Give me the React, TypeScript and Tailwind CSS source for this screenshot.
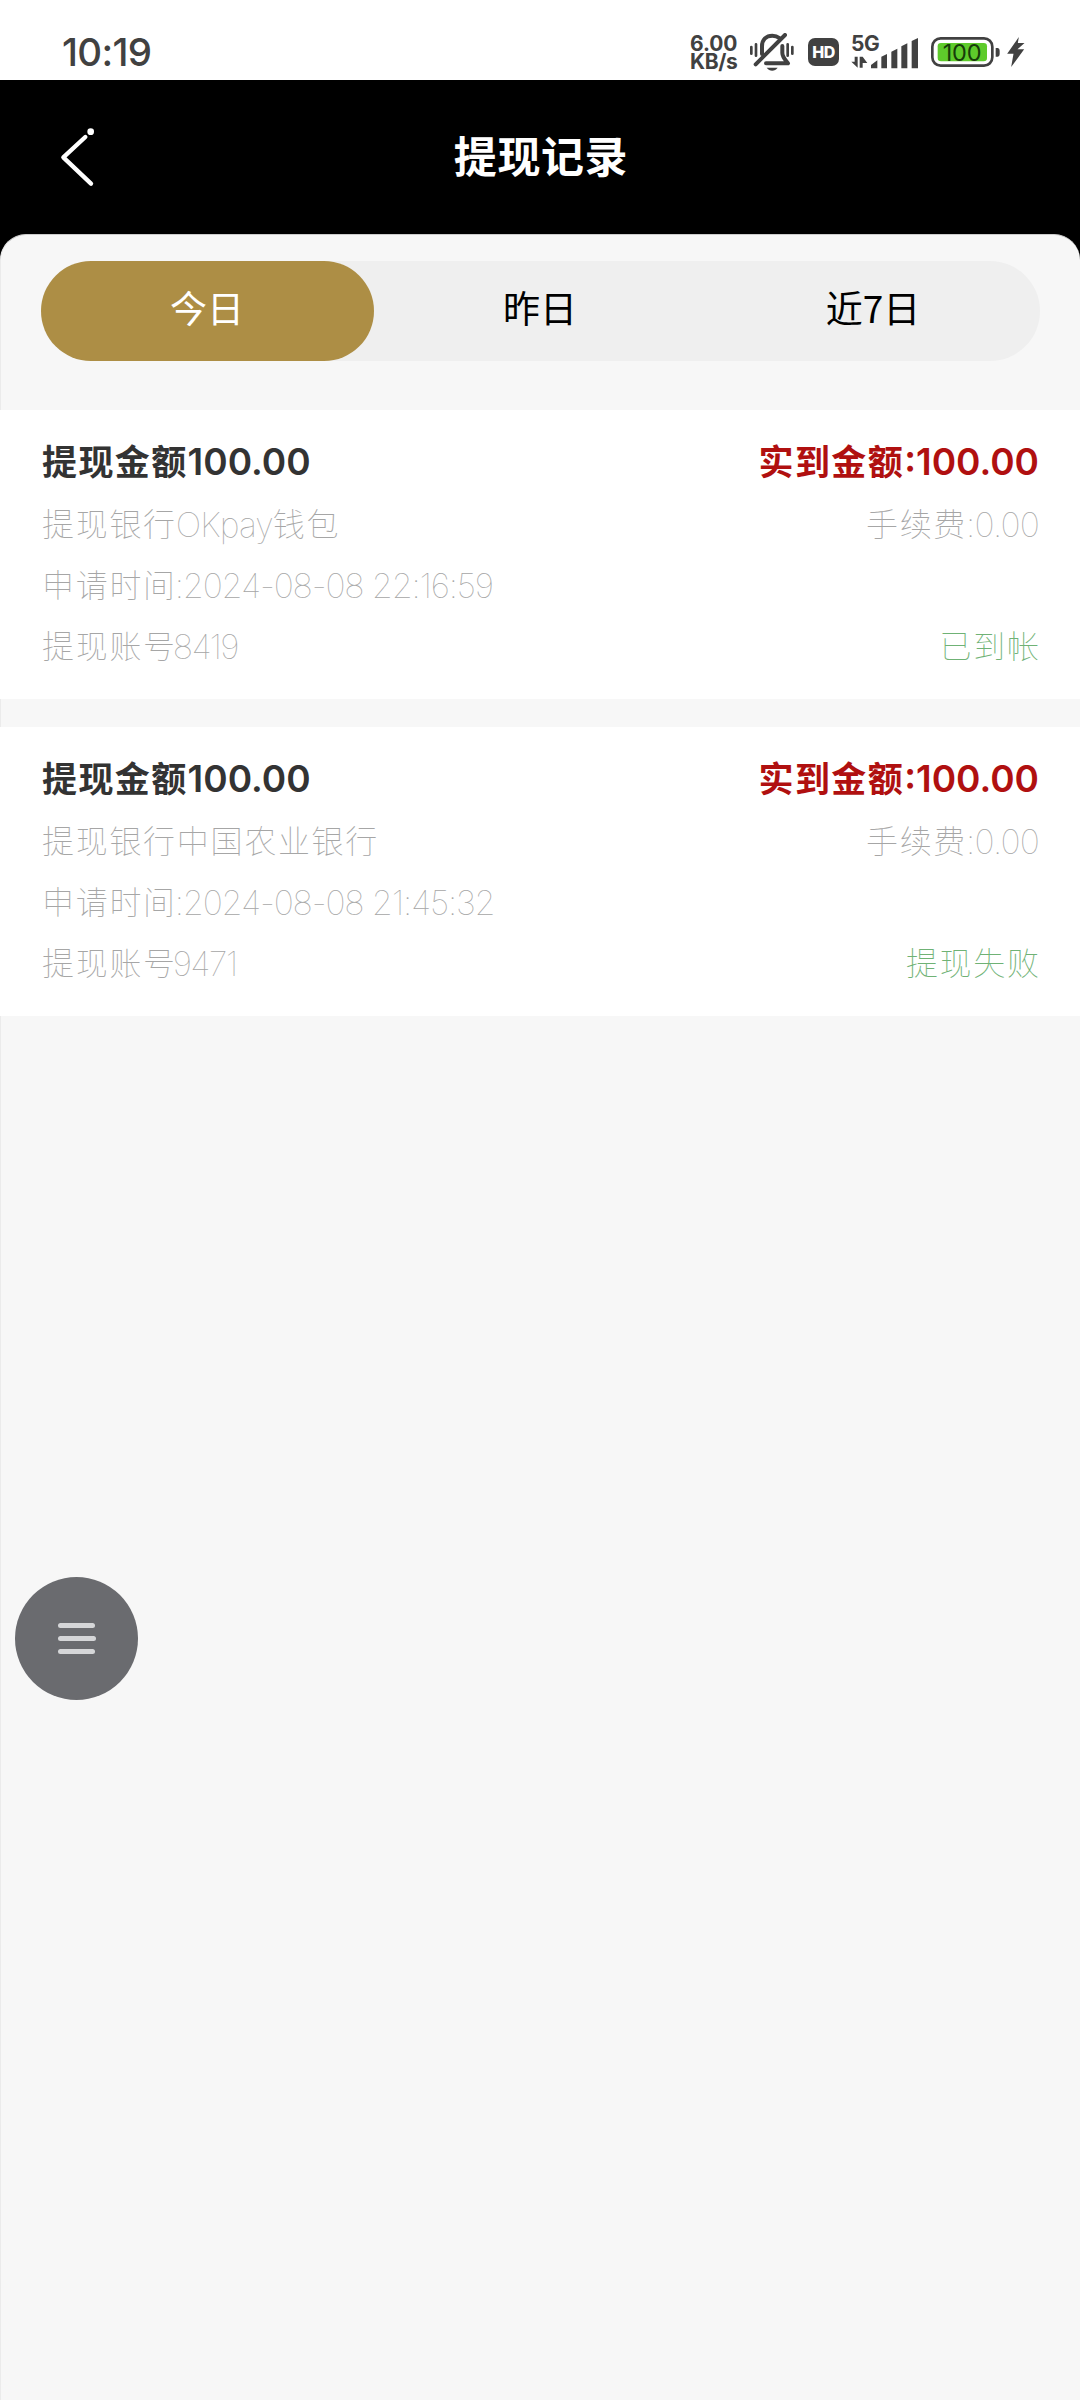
import React, { useState } from "react";
import clsx from "clsx";

interface WithdrawRecord {
  id: number;
  amount: string;
  received: string;
  bank: string;
  bankLatin?: string;
  bankTail?: string;
  fee: string;
  time: string;
  account: string;
  status: string;
}

const TABS = ["今日", "昨日", "近7日"];

const RECORDS: WithdrawRecord[] = [
  {
    id: 1,
    amount: "100.00",
    received: "100.00",
    bank: "",
    bankLatin: "OKpay",
    bankTail: "钱包",
    fee: "0.00",
    time: "2024-08-08 22:16:59",
    account: "8419",
    status: "已到帐",
  },
  {
    id: 2,
    amount: "100.00",
    received: "100.00",
    bank: "中国农业银行",
    fee: "0.00",
    time: "2024-08-08 21:45:32",
    account: "9471",
    status: "提现失败",
  },
];

function StatusBar() {
  return (
    <div className="flex h-20 items-start justify-between bg-white pl-[62px] pr-[55px] font-['Inter','Noto_Sans_CJK_SC',sans-serif] text-[#414141]">
      <span className="mt-[33px] text-[38.5px] leading-[38px] font-medium tracking-[-0.7px]">10:19</span>
      <div className="mt-[34px] flex h-9 items-center">
        <div className="mt-[2px] flex w-[49px] flex-col text-[21px] leading-[18.5px] font-bold">
          <span className="tracking-[-0.1px]">6.00</span>
          <span className="tracking-[-0.4px]">KB/s</span>
        </div>
        {/* 静音 */}
        <svg className="ml-[10px] h-[38px] w-[46px]" viewBox="267 40 138 114" fill="none" stroke="#414141" strokeWidth="12" strokeLinecap="round">
          <path d="M274 82v20M288 74v34M383 74v34M397 82v20" strokeWidth="8" />
          <path d="M306 103V80c0-20 13-32 31-32 9 0 16 3 21 7" />
          <path d="M375 46 287 134" />
          <path d="M367 79v21c0 12 8 20 17 31H318" strokeLinejoin="round" />
          <path d="M320 144h33c-8 12-25 12-33 0Z" fill="#414141" stroke="none" />
        </svg>
        <div className="ml-[13px] flex h-[28px] w-[31px] items-center justify-center rounded-[7px] bg-[#414141] text-[16px] font-extrabold tracking-[-0.4px] text-white">
          HD
        </div>
        <div className="relative ml-[12px] h-[36px] w-[68px]">
          <span className="absolute -top-px left-0 text-[21px] leading-[21px] font-bold tracking-[-0.5px]">5G</span>
          <svg className="h-[36px] w-[68px]" viewBox="570 40 204 108" fill="#414141">
            <path d="M571 123h10v-15h9v33zM596 108v33h9v-33zM605 108l14 19h-14z" />
            <path d="M630 133l19-14v24h-19zM661 108l17-8v43h-17zM691 93l18-9v59h-18zM721 77l18-9v75h-18zM752 61l19-9v91h-19z" />
          </svg>
        </div>
        <div className="relative ml-[12px] h-[30px] w-[70px]">
          <svg className="h-[30px] w-[70px]" viewBox="813 50 210 90" fill="none">
            <rect x="817" y="54" width="180" height="82" rx="25" stroke="#414141" strokeWidth="8" />
            <rect x="833" y="68" width="148" height="55" rx="10" fill="#5ecb2b" />
            <path d="M1007 83h7q5 2 5 8v10q0 7-5 8h-7z" fill="#414141" />
          </svg>
          <span className="absolute inset-y-0 left-0 w-[62px] text-center text-[23.5px] leading-[31px] tracking-[-0.2px] text-[#173d09]">100</span>
        </div>
        <svg className="ml-[5px] h-[30px] w-[19px]" viewBox="1040 51 56 90" fill="#414141">
          <path d="M1078 51 1043 101H1062L1055 141 1094 88H1074L1095 69H1075z" />
        </svg>
      </div>
    </div>
  );
}

function Label({ children }: { children: React.ReactNode }) {
  return <span className="text-[32px] tracking-[1.7px]">{children}</span>;
}

function RecordCard({ record }: { record: WithdrawRecord }) {
  return (
    <article className="-ml-px h-[289px] bg-white pt-[21px] pr-[41px] pl-[42px] font-thin text-[#a6a6a6]">
      <div className="mb-px flex h-[62px] items-center justify-between text-[35px] leading-[48px] font-bold">
        <div className="flex text-[#333333]">
          <span className="tracking-[1.4px]">提现金额</span>
          <span className="text-[37px] font-semibold">{record.amount}</span>
        </div>
        <div className="flex text-[#b01010]">
          <span className="tracking-[1.4px]">实到金额</span>
          <span className="text-[37px] font-semibold">:{record.received}</span>
        </div>
      </div>
      <div className="flex h-[61px] items-center justify-between">
        <div className="flex items-center">
          <Label>提现银行{record.bank}</Label>
          {record.bankLatin && <span className="-ml-px text-[34px] tracking-[-0.9px]">{record.bankLatin}</span>}
          {record.bankTail && <Label>{record.bankTail}</Label>}
        </div>
        <div className="flex items-center">
          <Label>手续费</Label>
          <span className="-ml-px text-[34px] tracking-[-0.8px]">:{record.fee}</span>
        </div>
      </div>
      <div className="flex h-[61px] items-center">
        <Label>申请时间</Label>
        <span className="-ml-[2px] text-[34px] tracking-[-1.2px]">:{record.time}</span>
      </div>
      <div className="flex h-[61px] items-center justify-between">
        <div className="flex items-center">
          <Label>提现账号</Label>
          <span className="-ml-[4px] text-[34px] tracking-[-1.7px]">{record.account}</span>
        </div>
        <span className="-mr-[1.7px] text-[32px] tracking-[1.7px] text-[#6fb275]">{record.status}</span>
      </div>
    </article>
  );
}

export default function App() {
  const [activeTab, setActiveTab] = useState(0);

  return (
    <div className="flex h-[2400px] w-[1080px] flex-col overflow-hidden bg-black font-['Inter','Noto_Sans_CJK_SC',sans-serif]">
      <StatusBar />

      <header className="grid h-[154px] grid-cols-[1fr_auto_1fr] items-center pr-[56px] pl-[58px]">
        <button className="h-[64px] w-[40px]" aria-label="返回">
          <svg className="h-[64px] w-[40px]" viewBox="174 375 120 192" fill="none" stroke="#fff" strokeWidth="13" strokeLinecap="round" strokeLinejoin="round">
            <path d="M256 411 190 472 273 551" />
            <circle cx="272" cy="395" r="10" fill="#fff" stroke="none" />
          </svg>
        </button>
        <h1 className="text-[43px] leading-[60px] font-bold tracking-[0.6px] text-white">提现记录</h1>
      </header>

      <main className="flex-1 rounded-t-[26px] border-t border-l border-t-[#cccccc] border-l-[#ebebeb] bg-[#f7f7f7]">
        <nav className="mt-[26px] mr-[40px] mb-[49px] ml-[40px] grid h-[100px] grid-cols-3 rounded-full bg-[#efefef]">
          {TABS.map((tab, index) => (
            <button
              key={tab}
              onClick={() => setActiveTab(index)}
              className={clsx(
                "rounded-full pr-px pb-1.5 font-['Noto_Sans_CJK_SC',sans-serif] text-[37px]",
                activeTab === index ? "bg-[#ad8e45] text-white" : "text-black"
              )}
            >
              {tab}
            </button>
          ))}
        </nav>

        <section className="flex flex-col gap-[28px]">
          {RECORDS.map((record) => (
            <RecordCard key={record.id} record={record} />
          ))}
        </section>
      </main>

      {/* 悬浮菜单按钮 */}
      <button className="absolute top-[1577px] left-[15px] flex h-[123px] w-[123px] flex-col items-center justify-center gap-2 rounded-full bg-[#6a6b6f]" aria-label="菜单">
        <span className="h-[5px] w-[37px] rounded-full bg-[#d5d6d8]" />
        <span className="h-[5px] w-[38px] rounded-full bg-[#d5d6d8]" />
        <span className="h-[5px] w-[37px] rounded-full bg-[#d5d6d8]" />
      </button>
    </div>
  );
}
